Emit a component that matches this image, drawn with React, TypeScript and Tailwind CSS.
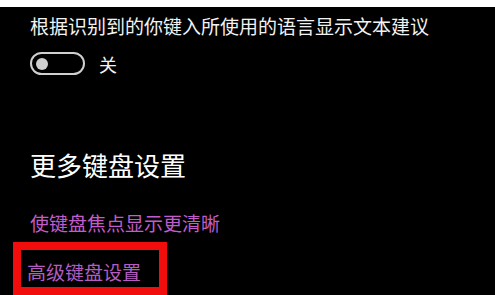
export default function App() {
  return (
    <div
      className="flex h-[295px] w-[495px] flex-col overflow-hidden bg-white pt-[7px]"
      style={{ fontFamily: '"Noto Sans CJK SC", "Noto Sans", sans-serif' }}
    >
      <div className="flex flex-1 flex-col bg-black pl-[30px] pt-[9px]">
        {/* Setting line */}
        <div className="h-[20px] whitespace-nowrap text-[19px] leading-[20px] text-[#f2f2f2]">
          根据识别到的你键入所使用的语言显示文本建议
        </div>

        {/* Toggle */}
        <div className="mt-[16px] flex h-[23px] items-center gap-[14px]">
          <div className="flex h-[23px] w-[55px] items-center rounded-full border-2 border-[#cfcfcf] pl-[4px]">
            <div className="h-[12px] w-[12px] rounded-full bg-[#cfcfcf]" />
          </div>
          <span className="text-[18px] leading-[20px] text-[#f2f2f2]">关</span>
        </div>

        {/* Section heading */}
        <div className="mt-[75px] h-[30px] text-[26px] leading-[30px] text-white">
          更多键盘设置
        </div>

        {/* Links */}
        <div className="mt-[31px] h-[24px] text-[19px] leading-[24px] text-[#c25ccb]">
          使键盘焦点显示更清晰
        </div>

        <div className="-ml-[17px] mt-[7px] h-[53px] w-[154px] border-[8px] border-[#f20d0d]">
          <div className="h-[37px] pl-[6px] pt-[10px] text-[19px] leading-[24px] text-[#b45cc0]">
            高级键盘设置
          </div>
        </div>
      </div>
    </div>
  );
}
